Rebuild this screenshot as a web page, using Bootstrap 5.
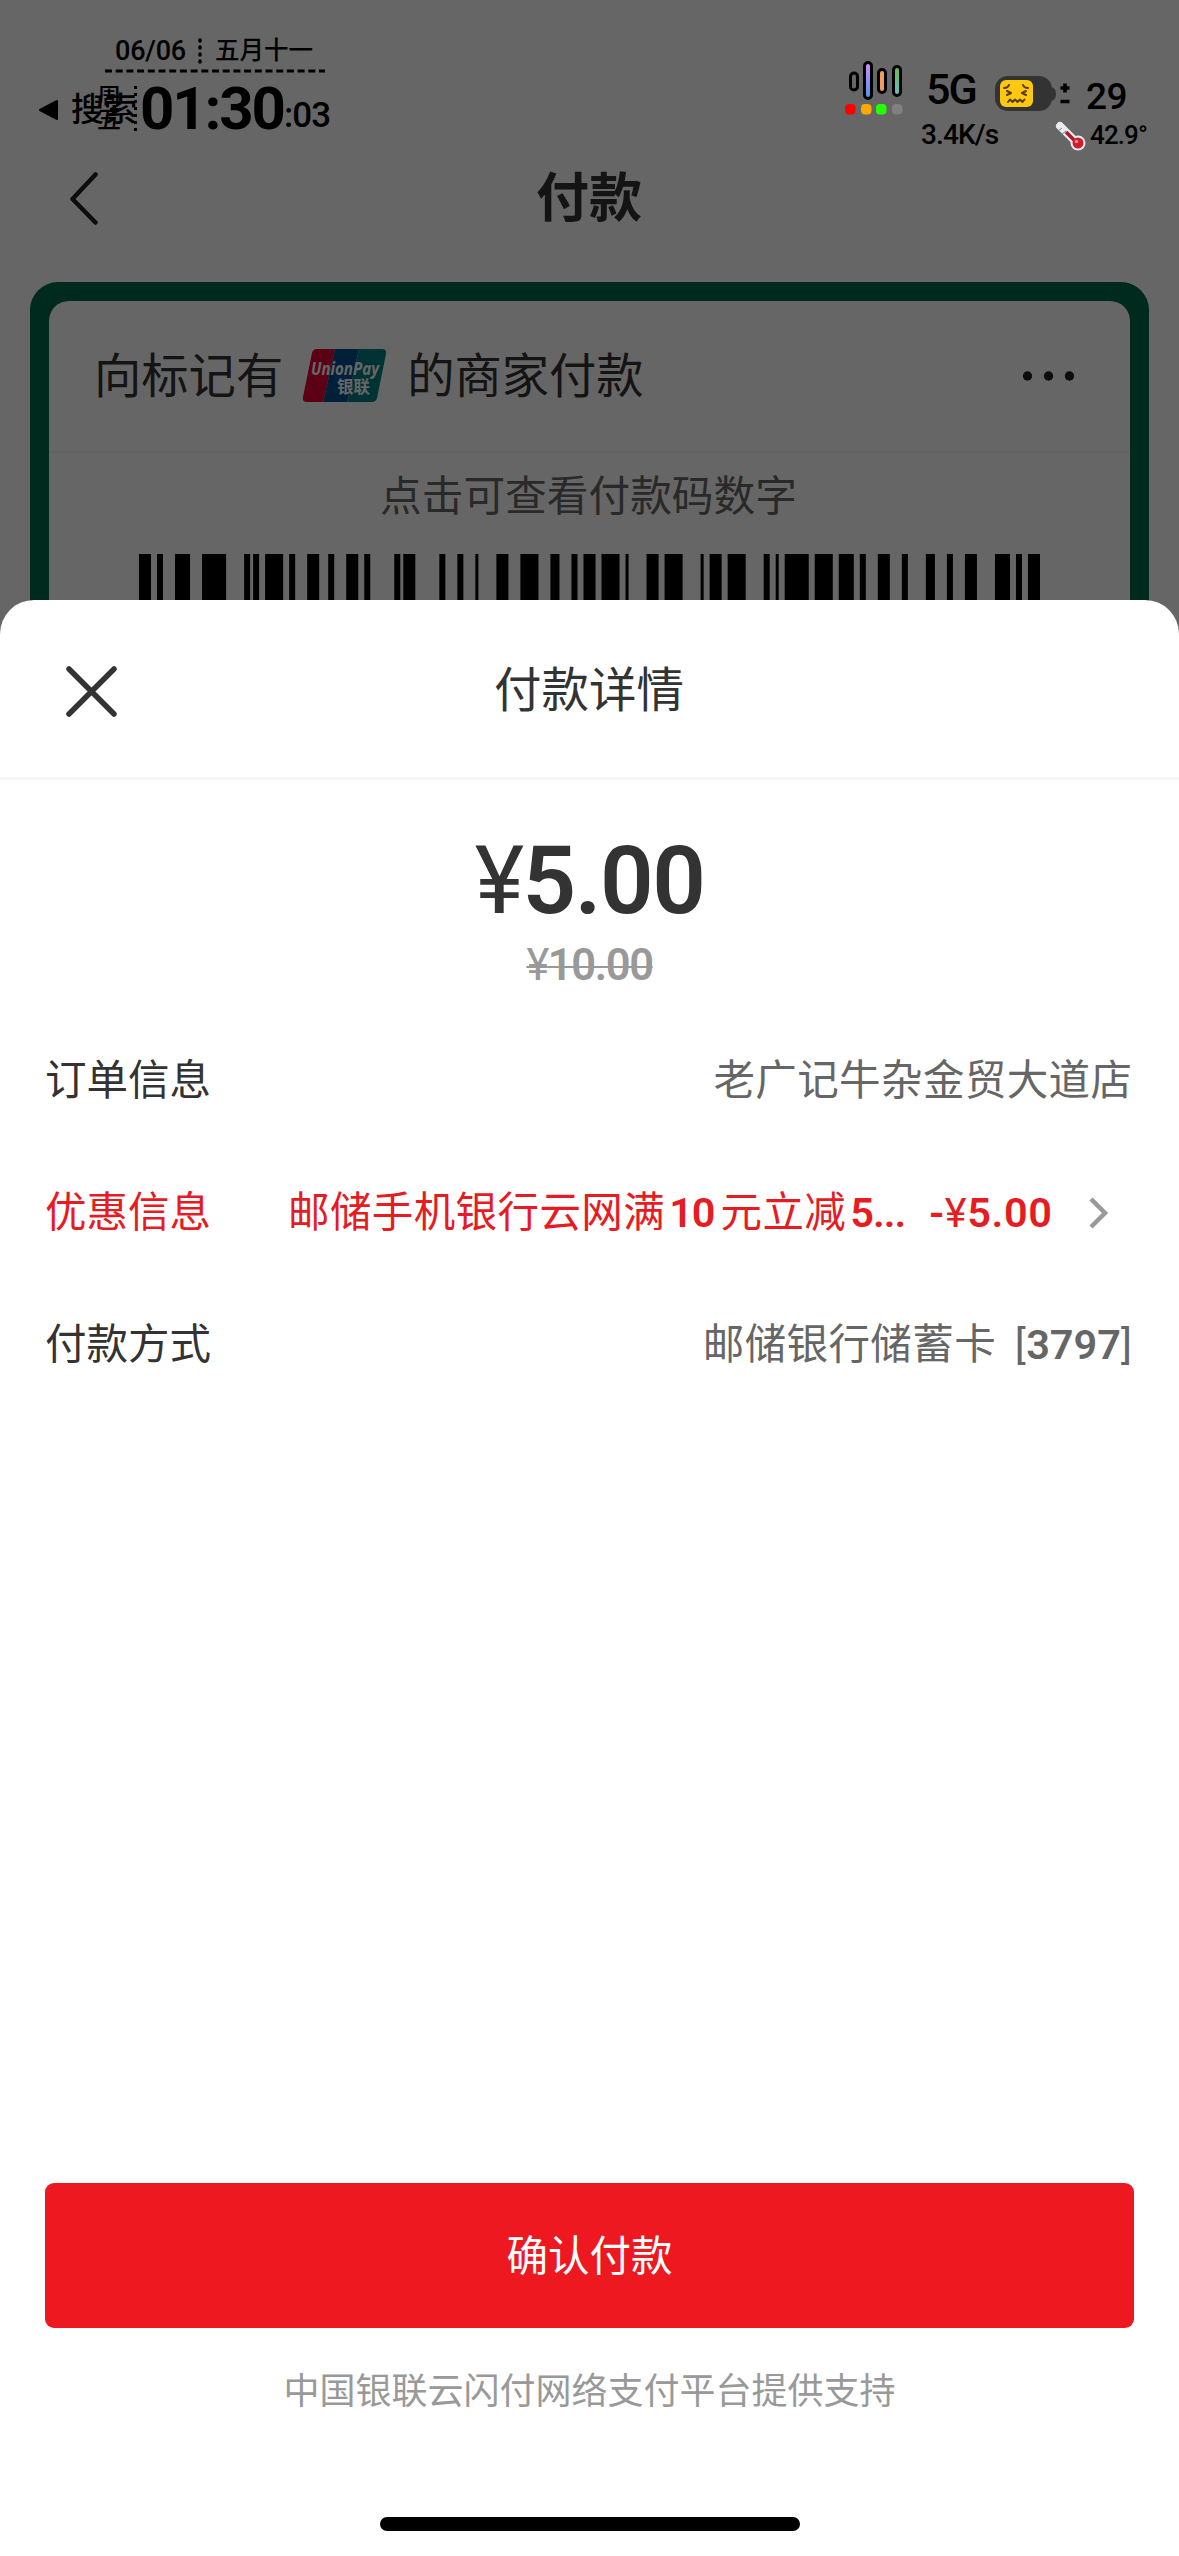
<!DOCTYPE html>
<html lang="zh-CN">
<head>
<meta charset="utf-8">
<meta name="viewport" content="width=device-width, initial-scale=1">
<title>付款</title>
<link href="https://cdn.jsdelivr.net/npm/bootstrap@5.3.0/dist/css/bootstrap.min.css" rel="stylesheet">
<style>
body{font-family:Roboto,"Noto Sans CJK SC",sans-serif;color:#333;background:#fff;line-height:1;overflow:hidden}
svg{display:block;flex:none}
.screen{width:1179px;height:2556px}
.dim{z-index:1;background:rgba(0,0,0,.6)}
.statusbar{z-index:2;height:150px;color:#000;font-weight:500}
.status-left{width:330px;flex:none}
.date-row{margin-left:104px;width:221px;padding:38px 12px 0 11px;height:69px;font-size:27px;letter-spacing:-.2px}
.date-row .han{font-size:24.5px;letter-spacing:0;margin-top:1px}
.dash{margin-left:104px}
.clock-row{margin:11px 0 0 38px;height:48px}
.clock-row span{flex:none}
.back-app{font-size:33px;margin:2px 0 0 12px;width:63px;white-space:nowrap}
.weekday{left:59px;top:2px;font-size:24px;line-height:23px;width:24px}
.clock{font-size:60px;font-weight:700;width:142px;margin-left:2px;letter-spacing:-2.2px;margin-top:2px}
.secs{font-size:35px;margin-top:14px;letter-spacing:-.9px;margin-left:2px}
.bars{margin:61px 0 0 515px}
.net{margin-left:23px;padding-top:68px;width:69px;flex:none}
.net .gen{font-size:43px;letter-spacing:-2px}
.net .rate{font-size:28px;margin:10px 0 0 -5px;white-space:nowrap;letter-spacing:-.9px}
.power{padding-top:75px}
.pct{font-size:37px;margin:3px 0 0 15px;letter-spacing:-.5px}
.temp{font-size:26px;margin:7px 0 0 4px;letter-spacing:-.9px}
.navrow{margin-top:150px;height:98px;padding-left:70px}
.navttl{font-size:53px;font-weight:700;left:0;right:1px}
.paycard{margin:34px 30px 0;border:19px solid #00694a;border-bottom:0;border-radius:28px 28px 0 0;background:#00694a;height:700px}
.paycard-in{background:#fff;border-radius:20px 20px 0 0;height:700px}
.card-top{height:152px;padding:0 54px 0 45px;font-size:47.3px;border-bottom:2px solid #f6f6f6}
.card-top span{margin-top:4px}
.hint{font-size:41.7px;color:#666;margin:23px 2px 36px 0}
.barcode{margin-left:90px}
.sheet{z-index:3;top:600px;height:1956px;background:#fff;border-radius:34px 34px 0 0}
.sheet-head{height:180px;border-bottom:3px solid #f5f5f5;padding:6px 0 0 66px}
.sheet-ttl{font-size:47.5px;left:0;right:1px}
.amount{font-size:94px;font-weight:600;margin-top:54px;height:93px;letter-spacing:-1.5px}
.amount .yen{font-weight:400}
.was{font-size:43.5px;font-weight:600;color:#999;margin-top:17px;height:49px;letter-spacing:-1.4px;text-decoration:line-through;text-decoration-thickness:2px}
.was .yen{font-weight:400}
.rows{margin-top:22px;padding:0 47px 0 45px;font-size:41.5px}
.line{height:132px}
.val{color:#666;letter-spacing:.4px;margin-right:-.4px}
.val .num{letter-spacing:0}
.red{color:#e71b22}
.num{font-weight:600}
.deal{margin-left:77px;width:620px;letter-spacing:.4px}
.deal .num{letter-spacing:-1px;margin:0 6px 0 4px}
.off{letter-spacing:.6px;margin-right:-.6px}
.confirm,.confirm:hover{background:#ee1820;color:#fff;font-size:41.5px;height:145px;border:0;border-radius:9px;margin:0 45px;padding-top:9px}
.foot{font-size:36px;color:#999;margin:46px 0 107px 0}
.homebar{width:420px;height:14px;border-radius:7px;background:#000;margin-bottom:25px}
</style>
</head>
<body>
<div class="screen position-relative overflow-hidden">
  <div class="dim position-absolute top-0 start-0 w-100 h-100"></div>

  <div class="statusbar position-absolute top-0 start-0 w-100 d-flex align-items-start">
    <div class="status-left">
      <div class="date-row d-flex justify-content-between">
        <span>06/06</span>
        <svg width="4" height="26"><path d="M2 2V26" stroke="#000" stroke-width="3.5" stroke-linecap="round" stroke-dasharray="1 6"/></svg>
        <span class="han">五月十一</span>
      </div>
      <svg class="dash" width="222" height="4"><path d="M1 2H221" stroke="#000" stroke-width="3" stroke-dasharray="7 3.7"/></svg>
      <div class="clock-row position-relative d-flex">
        <svg width="21" height="48"><path d="M2 26L19 17V35Z" fill="#000" stroke="#000" stroke-width="2" stroke-linejoin="round"/></svg>
        <span class="back-app align-self-center">搜索</span>
        <span class="weekday position-absolute">周五</span>
        <svg width="4" height="48"><path d="M0 2V48" stroke="#000" stroke-width="6" stroke-dasharray="3 4"/></svg>
        <span class="clock align-self-center">01:30</span>
        <span class="secs">:03</span>
      </div>
    </div>
    <svg class="bars" width="58" height="54" viewBox="845 61 58 54">
      <defs>
        <linearGradient id="g1" x2="0" y2="1"><stop stop-color="#d68cf5"/><stop offset="1" stop-color="#4597f5"/></linearGradient>
        <linearGradient id="g2" x2="0" y2="1"><stop stop-color="#62bd4d"/><stop offset="1" stop-color="#65bdc5"/></linearGradient>
      </defs>
      <g stroke="#000" stroke-width="3">
        <rect x="850.5" y="73" width="7" height="17" rx="3.5" fill="#666"/>
        <rect x="864.5" y="62.500" width="7" height="36" rx="3.500" fill="url(#g1)"/>
        <rect x="878.500" y="69.500" width="7" height="23" rx="3.500" fill="#f79a5e"/>
        <rect x="893.500" y="66.500" width="7" height="29" rx="3.500" fill="url(#g2)"/>
      </g>
      <rect x="845" y="104" width="10.500" height="10.500" rx="4" fill="#f00"/><rect x="861" y="104" width="10.500" height="10.500" rx="4" fill="#ffa800"/><rect x="876" y="104" width="10.500" height="10.500" rx="4" fill="#2f0"/><rect x="892" y="104" width="10.500" height="10.500" rx="4" fill="#808080"/>
    </svg>
    <div class="net">
      <div class="gen">5G</div>
      <div class="rate">3.4K/s</div>
    </div>
    <div class="power">
      <div class="d-flex">
        <svg width="76" height="38" viewBox="995 75 76 38">
          <rect x="995" y="76" width="57" height="35" rx="13" fill="#333"/><path d="M1051 87q5 1 5 7t-5 7z" fill="#333"/>
          <rect x="1000" y="80" width="33" height="27" rx="6" fill="#fdc910"/>
          <g fill="none" stroke="#5b3a10" stroke-width="2" stroke-linecap="round" stroke-linejoin="round"><path d="M1004 88q4 0 5-3M1028 88q-4 0-5-3M1007 91l4 2-4 2M1026 91l-4 2 4 2M1008 102l2-2.500 2.500 2.500 2.500-2.500 2.500 2.500 2.500-2.500 2.500 2.500 2-2.500"/></g>
          <path d="M1060.500 88h9M1065 83.500v9M1060.500 101.500h9" stroke="#000" stroke-width="3.600"/>
        </svg>
        <span class="pct">29</span>
      </div>
      <div class="d-flex">
        <svg style="margin:6px 0 0 60px" width="31" height="31" viewBox="1055 120 31 31">
          <path d="M1060 125L1077 142" stroke="#e9edf0" stroke-width="8" stroke-linecap="round"/><circle cx="1078" cy="142" r="7.500" fill="#e9edf0"/>
          <path d="M1066 131L1078 143" stroke="#b01825" stroke-width="3.500"/><circle cx="1078" cy="142" r="5.500" fill="#d01f2c"/><circle cx="1076.500" cy="140.500" r="1.600" fill="#f4a0a0"/>
          <path d="M1058 130l4-3M1062 133l4-3" stroke="#7d878c" stroke-width="1"/>
        </svg>
        <span class="temp">42.9°</span>
      </div>
    </div>
  </div>

  <div class="navrow d-flex align-items-center position-relative">
    <svg width="28" height="54"><path d="M25.500 2.500L2.500 27 25.500 50.500" fill="none" stroke="#222" stroke-width="4.500" stroke-linecap="round" stroke-linejoin="round"/></svg>
    <div class="navttl position-absolute text-center">付款</div>
  </div>

  <div class="paycard">
    <div class="paycard-in">
      <div class="card-top d-flex align-items-center">
        <span>向标记有</span>
        <svg class="mx-3" width="92" height="54" viewBox="300 350 92 54">
          <clipPath id="lg"><path d="M318 350H383q5 0 4 5L378 399q-1 4-5 4H308q-5 0-4-5L313 354q1-4 5-4Z"/></clipPath>
          <g clip-path="url(#lg)"><path d="M300 350H336L324 404H300Z" fill="#e60039"/><path d="M336 350H360L348 404H324Z" fill="#00508f"/><path d="M360 350H392V404H348Z" fill="#00807f"/></g>
          <text x="312" y="376" font-family="Open Sans" font-weight="700" font-style="italic" font-size="17" fill="#fff" textLength="68" lengthAdjust="spacingAndGlyphs">UnionPay</text>
          <text x="338" y="394" font-family="Noto Sans CJK SC" font-weight="700" font-size="16.500" fill="#fff">银联</text>
        </svg>
        <span>的商家付款</span>
        <svg class="ms-auto" width="54" height="10"><g fill="#222"><circle cx="5.500" cy="5" r="4.700"/><circle cx="26.500" cy="5" r="4.700"/><circle cx="47.500" cy="5" r="4.700"/></g></svg>
      </div>
      <div class="hint text-center">点击可查看付款码数字</div>
      <svg id="barcode" class="barcode" width="901" height="200" viewBox="0 0 300 200" preserveAspectRatio="none"></svg>
    </div>
  </div>

  <div class="sheet position-absolute start-0 w-100 d-flex flex-column">
    <div class="sheet-head d-flex align-items-center position-relative">
      <svg width="51" height="51"><path d="M3 3L48 48M48 3L3 48" stroke="#333" stroke-width="5.500" stroke-linecap="round"/></svg>
      <div class="sheet-ttl position-absolute text-center">付款详情</div>
    </div>
    <div class="amount text-center"><span class="yen">¥</span>5.00</div>
    <div class="text-center"><span class="was d-inline-block"><span class="yen">¥</span>10.00</span></div>
    <div class="rows">
      <div class="line d-flex align-items-center justify-content-between"><span>订单信息</span><span class="val">老广记牛杂金贸大道店</span></div>
      <div class="line d-flex align-items-center red">
        <span>优惠信息</span>
        <span class="deal text-nowrap">邮储手机银行云网满<span class="num">10</span>元立减<span class="num">5...</span></span>
        <span class="num off ms-auto">-<span class="fw-normal">¥</span>5.00</span>
        <svg style="margin:0 22px 0 36px" width="22" height="34"><path d="M3 3L17 17 3 31" fill="none" stroke="#999" stroke-width="4.500"/></svg>
      </div>
      <div class="line d-flex align-items-center justify-content-between"><span>付款方式</span><span class="val">邮储银行储蓄卡 <span class="ms-2">[<span class="num">3797</span>]</span></span></div>
    </div>
    <button class="btn confirm mt-auto" type="button">确认付款</button>
    <div class="foot text-center">中国银联云闪付网络支付平台提供支持</div>
    <div class="homebar mx-auto"></div>
  </div>
</div>
<script src="https://cdn.jsdelivr.net/npm/bootstrap@5.3.0/dist/js/bootstrap.bundle.min.js"></script>
<script>
// Each pair is the start module and the width of one bar.
const bars = [[0,4],[6,2],[12,5],[21,8],[35,2],[38,2],[42,6],[50,2],[56,4],[63,2],[69,4],[75,2],[85,2],[88,4],[100,2],[106,2],[112,1],[119,4],[127,6],[137,3],[144,2],[148,4],[154,6],[162,1],[169,4],[175,6],[187,1],[190,4],[196,6],[208,2],[212,1],[215,8],[225,6],[233,5],[240,2],[246,4],[254,2],[262,3],[269,2],[275,4],[285,5],[292,2],[296,4]];
document.getElementById('barcode').innerHTML = '<path d="' + bars.map(([x, w]) => `M${x} 0h${w}v200h-${w}z`).join('') + '"/>';
</script>
</body>
</html>
